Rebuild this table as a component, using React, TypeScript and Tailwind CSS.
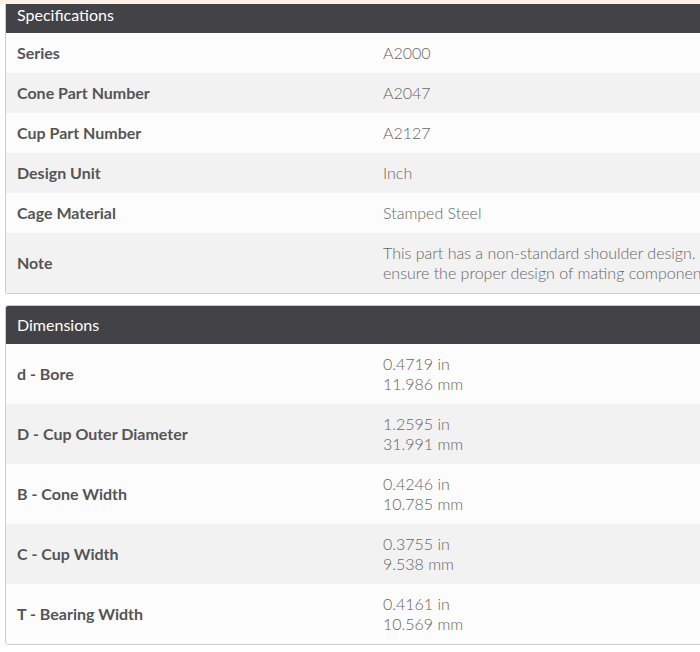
import React from "react";

const specs: [string, string[]][] = [
  ["Series", ["A2000"]],
  ["Cone Part Number", ["A2047"]],
  ["Cup Part Number", ["A2127"]],
  ["Design Unit", ["Inch"]],
  ["Cage Material", ["Stamped Steel"]],
  [
    "Note",
    [
      "This part has a non-standard shoulder design. Please contact your Timken engineer to",
      "ensure the proper design of mating components.",
    ],
  ],
];

const dims: [string, string[]][] = [
  ["d - Bore", ["0.4719 in", "11.986 mm"]],
  ["D - Cup Outer Diameter", ["1.2595 in", "31.991 mm"]],
  ["B - Cone Width", ["0.4246 in", "10.785 mm"]],
  ["C - Cup Width", ["0.3755 in", "9.538 mm"]],
  ["T - Bearing Width", ["0.4161 in", "10.569 mm"]],
];

function Row({ label, value, idx }: { label: string; value: string[]; idx: number }) {
  const multi = value.length > 1;
  return (
    <div
      className={`flex items-center ${multi ? "h-[60px]" : "h-[40px]"} ${
        idx % 2 === 0 ? "bg-[#fcfcfc]" : "bg-[#f2f2f2]"
      }`}
    >
      <div className="w-[377px] shrink-0 pl-[11px] font-bold text-[16px] text-[#555555]">{label}</div>
      <div className="font-light text-[16px] leading-[20px] text-[#666666] whitespace-nowrap">
        {value.map((v, i) => (
          <div key={i}>{v}</div>
        ))}
      </div>
    </div>
  );
}

export default function App() {
  return (
    <div
      className="w-[700px] h-[652px] overflow-hidden bg-white relative"
      style={{ fontFamily: "Lato, 'Open Sans', sans-serif" }}
    >
      <div className="h-[4px] bg-[#fdf0e4]" />
      <div className="ml-[5px] w-[800px] border border-[#cccccc] border-t-0 rounded-b-[3px] overflow-hidden">
        <div className="h-[29px] bg-[#434347] text-white text-[16px] pl-[11px] leading-[22px]">Specifications</div>
        {specs.map(([l, v], i) => (
          <Row key={l} label={l} value={v} idx={i} />
        ))}
      </div>
      <div className="ml-[5px] mt-[11px] w-[800px] border border-[#cccccc] rounded-[3px] overflow-hidden">
        <div className="h-[38px] bg-[#434347] text-white text-[16px] pl-[11px] flex items-center">Dimensions</div>
        {dims.map(([l, v], i) => (
          <Row key={l} label={l} value={v} idx={i} />
        ))}
      </div>
    </div>
  );
}
